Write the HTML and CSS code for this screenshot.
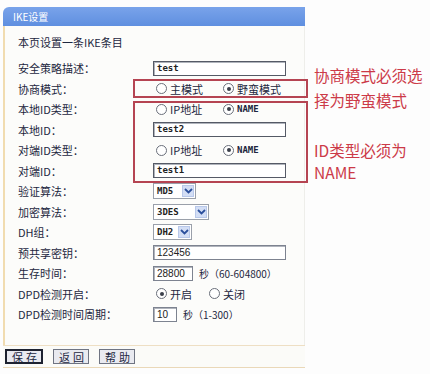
FILE: index.html
```html
<!DOCTYPE html>
<html lang="zh-CN">
<head>
  <meta charset="UTF-8">
  <title>IKE设置</title>
  <link rel="stylesheet" href="styles.css">
</head>
<body>
  <div class="page">
    <div class="left">
      <div class="panel">
        <div class="panel-head">IKE设置</div>
        <div class="panel-body">
          <p class="intro">本页设置一条IKE条目</p>
          <div class="form">
            <!-- 安全策略描述 -->
            <div class="label">安全策略描述：</div>
            <div class="value"><span class="field wide">test</span></div>

            <!-- 协商模式 -->
            <div class="label">协商模式：</div>
            <div class="value">
              <span class="radio"></span><span class="opt">主模式</span>
              <span class="radio on"></span><span class="opt">野蛮模式</span>
            </div>

            <div class="label">本地ID类型：</div>
            <div class="value">
              <span class="radio"></span><span class="opt">IP地址</span>
              <span class="radio on"></span><span class="opt latin">NAME</span>
            </div>

            <div class="label">本地ID：</div>
            <div class="value"><span class="field wide">test2</span></div>

            <div class="label">对端ID类型：</div>
            <div class="value">
              <span class="radio"></span><span class="opt">IP地址</span>
              <span class="radio on"></span><span class="opt latin">NAME</span>
            </div>

            <div class="label">对端ID：</div>
            <div class="value"><span class="field wide">test1</span></div>

            <!-- 算法 -->
            <div class="label">验证算法：</div>
            <div class="value"><span class="select md5"><span class="sel-text">MD5</span><span class="sel-btn"><svg width="9" height="6" viewBox="0 0 9 6"><path d="M1 1 L4.5 4.5 L8 1" fill="none" stroke="#2b4f9c" stroke-width="1.8"/></svg></span></span></div>

            <div class="label">加密算法：</div>
            <div class="value"><span class="select des"><span class="sel-text">3DES</span><span class="sel-btn"><svg width="9" height="6" viewBox="0 0 9 6"><path d="M1 1 L4.5 4.5 L8 1" fill="none" stroke="#2b4f9c" stroke-width="1.8"/></svg></span></span></div>

            <div class="label">DH组：</div>
            <div class="value"><span class="select dh"><span class="sel-text">DH2</span><span class="sel-btn"><svg width="9" height="6" viewBox="0 0 9 6"><path d="M1 1 L4.5 4.5 L8 1" fill="none" stroke="#2b4f9c" stroke-width="1.8"/></svg></span></span></div>

            <div class="label">预共享密钥：</div>
            <div class="value"><span class="field wide plain">123456</span></div>

            <div class="label">生存时间：</div>
            <div class="value"><span class="field life plain">28800</span><span class="unit">秒（60-604800）</span></div>

            <div class="label">DPD检测开启：</div>
            <div class="value">
              <span class="radio on"></span><span class="opt dpd">开启</span>
              <span class="radio"></span><span class="opt">关闭</span>
            </div>

            <div class="label">DPD检测时间周期：</div>
            <div class="value"><span class="field period plain">10</span><span class="unit">秒（1-300）</span></div>
          </div>
        </div>
      </div>
      <div class="buttons">
        <button class="btn default">保存</button>
        <button class="btn">返回</button>
        <button class="btn">帮助</button>
      </div>

      <!-- red highlight boxes -->
      <div class="mark mark-mode"></div>
      <div class="mark mark-id"></div>
    </div>

    <div class="notes">
      <p class="note note-mode">协商模式必须选<br>择为野蛮模式</p>
      <p class="note note-id">ID类型必须为<br>NAME</p>
    </div>
  </div>
</body>
</html>
```

FILE: styles.css
```css
body {
  margin: 0;
  background: #fdfdfd;
  font-family: 'Noto Sans CJK SC', 'Noto Sans', sans-serif;
  font-size: 11px;
  color: #1d2740;
}
.page {
  display: flex;
  padding: 7px 0 0 3px;
}
.left {
  position: relative;
  width: 302px;
  flex-shrink: 0;
}
.panel-head {
  height: 19px;
  line-height: 19px;
  padding-left: 10px;
  background: linear-gradient(#79a3ea, #5f8fe0);
  border-top-left-radius: 6px;
  color: #fff;
  font-size: 10px;
}
.panel-body {
  height: 310px;
  background: #fcfcfa;
  border-left: 2px solid #f1dcb0;
  border-right: 1px solid #eeeeea;
  padding: 9px 0 0 13px;
}
.intro {
  margin: 0 0 9px;
  line-height: 14px;
}
.form {
  display: grid;
  grid-template-columns: 135px 1fr;
  grid-auto-rows: 20.5px;
  align-items: center;
}
.label {
  white-space: nowrap;
}
.value {
  display: flex;
  align-items: center;
}
.field {
  box-sizing: border-box;
  height: 15px;
  line-height: 13px;
  padding-left: 3px;
  border: 1px solid #555a66;
  box-shadow: inset 1px 1px 0 #b0b4bc;
  background: #fff;
  font-family: 'DejaVu Sans Mono', monospace;
  font-size: 9px;
  font-weight: bold;
  color: #222;
}
.field.plain {
  font-family: 'Liberation Sans', sans-serif;
  font-weight: normal;
  font-size: 10px;
  border-color: #7d8390;
}
.wide {
  width: 133px;
}
.life {
  width: 40px;
}
.period {
  width: 24px;
}
.unit {
  margin-left: 6px;
  font-size: 10px;
}
.radio {
  box-sizing: border-box;
  width: 11px;
  height: 11px;
  margin: 0 3px 0 3px;
  border: 1px solid #6a6f7a;
  border-radius: 50%;
  background: #fff;
  position: relative;
}
.radio.on::after {
  content: "";
  position: absolute;
  left: 2.5px;
  top: 2.5px;
  width: 4px;
  height: 4px;
  border-radius: 50%;
  background: #3a3f4a;
}
.opt {
  width: 50px;
}
.opt.latin {
  font-family: 'DejaVu Sans Mono', monospace;
  font-size: 9px;
  font-weight: bold;
}
.opt.dpd {
  width: 36px;
}
.select {
  box-sizing: border-box;
  display: flex;
  align-items: center;
  justify-content: space-between;
  height: 16px;
  border: 1px solid #9aa0aa;
  background: #fff;
  padding: 0 1px 0 3px;
  font-family: 'DejaVu Sans Mono', monospace;
  font-size: 9px;
  font-weight: bold;
  color: #222;
}
.md5 {
  width: 43px;
}
.des {
  width: 56px;
}
.dh {
  width: 39px;
}
.sel-btn {
  display: flex;
  align-items: center;
  justify-content: center;
  width: 12px;
  height: 12px;
  background: #d3def5;
  border: 1px solid #b8c8ea;
  box-sizing: border-box;
}
.buttons {
  display: flex;
  gap: 10px;
  height: 21px;
  align-items: center;
  padding-left: 2px;
  border-top: 1px solid #eedfc4;
  border-bottom: 1px solid #ead8b8;
  background: #fbfbf8;
}
.btn {
  height: 15px;
  padding: 0 1px 0 5px;
  font-family: 'Noto Sans CJK SC', sans-serif;
  font-size: 11px;
  line-height: 12px;
  letter-spacing: 3px;
  white-space: nowrap;
  color: #1d2740;
  background: #e9eaf0;
  border: 1px solid #6f7482;
}
.btn.default {
  border: 2px solid #1e2230;
}
.mark {
  position: absolute;
  left: 130px;
  right: -3px;
  border: 2px solid #b54452;
}
.mark-mode {
  top: 72px;
  height: 15px;
}
.mark-id {
  top: 94px;
  height: 78px;
}
.notes {
  padding-left: 9px;
  color: #cc3a48;
  font-size: 15.5px;
  white-space: nowrap;
}
.note {
  margin: 0;
}
.note-mode {
  padding-top: 56px;
  line-height: 25px;
}
.note-id {
  padding-top: 26px;
  line-height: 22px;
}
```
